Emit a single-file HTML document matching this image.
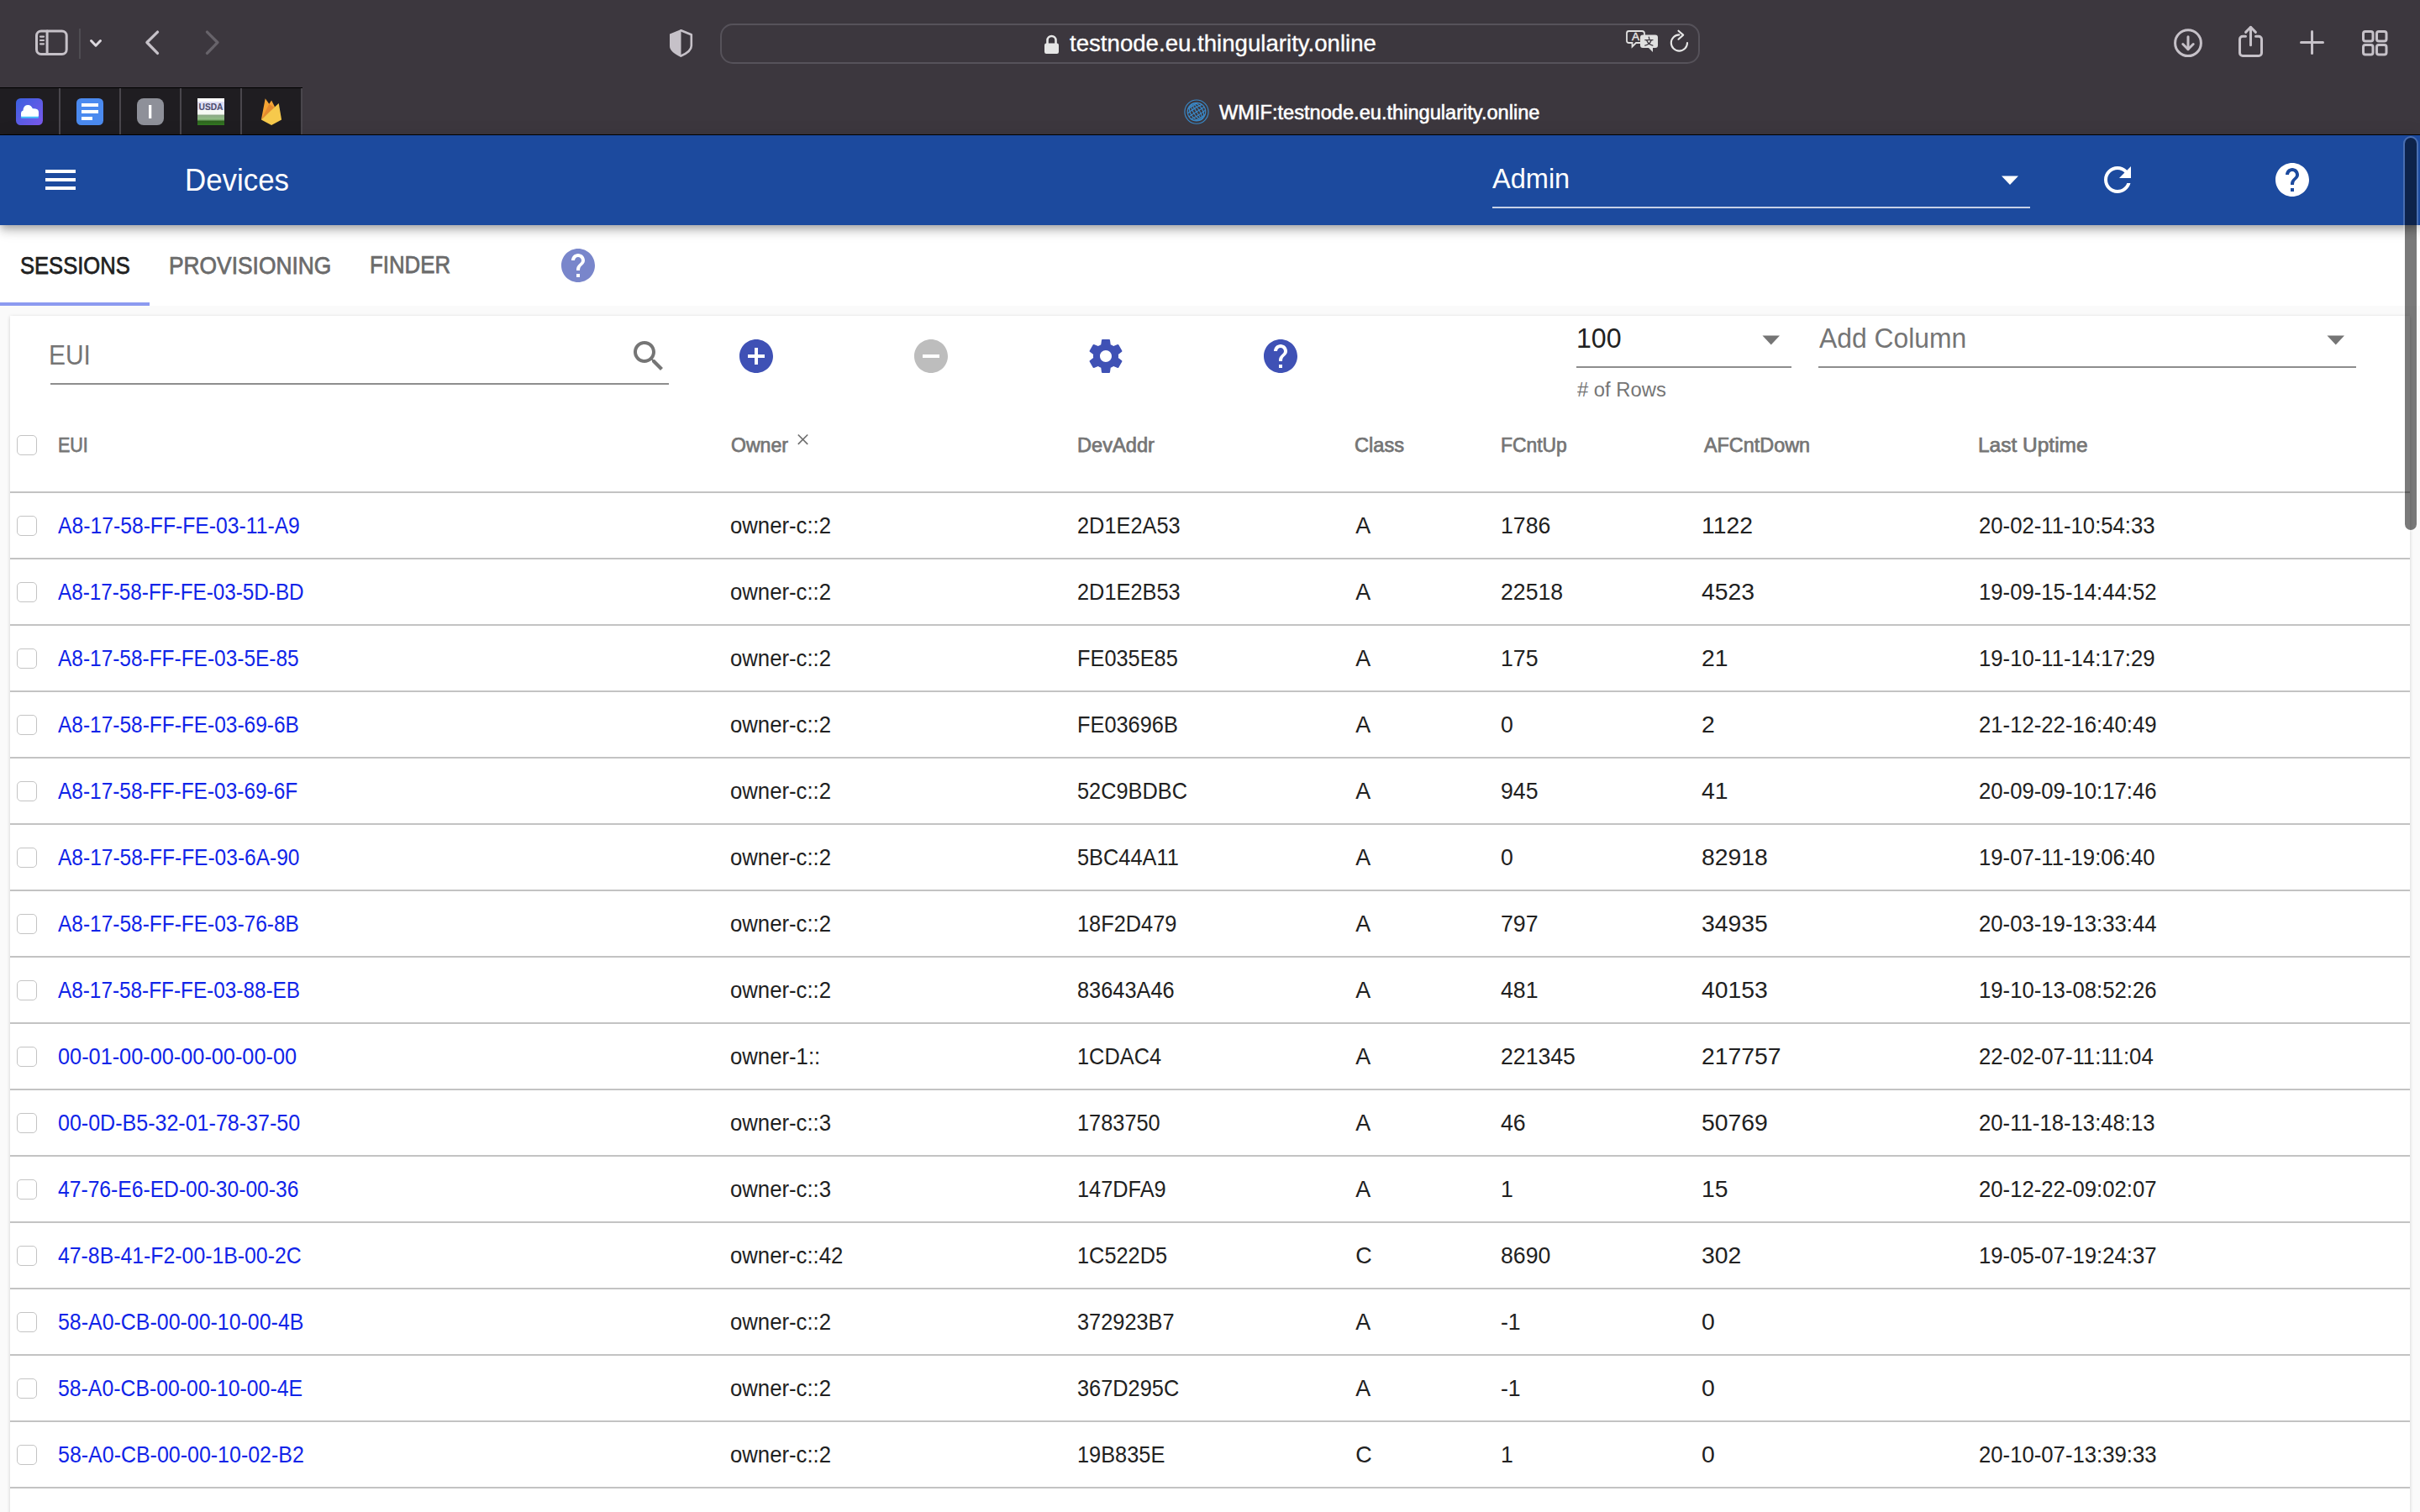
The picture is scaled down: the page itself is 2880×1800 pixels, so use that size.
<!DOCTYPE html>
<html><head><meta charset="utf-8">
<style>
*{margin:0;padding:0;box-sizing:border-box}
html,body{width:2880px;height:1800px;overflow:hidden;background:#fafafa;font-family:"Liberation Sans",sans-serif}
.a{position:absolute}
.t{position:absolute;white-space:nowrap;line-height:1}
#toolbar{left:0;top:0;width:2880px;height:161px;background:#3c373e}
#pinned{left:0;top:104px;width:360px;height:56px;background:#1f1d21;border-top:1px solid #000}
.sep{position:absolute;top:0;width:2px;height:56px;background:#49464c}
#tabline{left:0;top:160px;width:2880px;height:1px;background:#000}
#urlbar{left:857px;top:28px;width:1166px;height:48px;border:2px solid #56525a;border-radius:15px}
#appbar{left:0;top:161px;width:2880px;height:107px;background:#1c4a9e;box-shadow:0 4px 8px -2px rgba(0,0,0,.2),0 8px 10px 0 rgba(0,0,0,.14),0 2px 20px 0 rgba(0,0,0,.12);z-index:2}
#tabs{left:0;top:268px;width:2880px;height:96px;background:#fff;z-index:1}
#card{left:12px;top:376px;width:2856px;height:1500px;background:#fff;box-shadow:0 1px 4px rgba(0,0,0,0.18)}
.cb{position:absolute;left:20px;width:24px;height:24px;border:1.5px solid #c4c4c4;border-radius:5px;background:#fff}
.hr{position:absolute;left:12px;width:2856px;height:2px;background:#c3c3c3}
.c{color:#212121}
.lnk{color:#1024e8}
.h{color:#757575;-webkit-text-stroke:0.75px #757575}
.tab{color:#6b6b6b;-webkit-text-stroke:0.75px currentColor}
.ci{fill:#c5c0c7}
</style></head><body>
<div id="toolbar" class="a"></div>
<div id="pinned" class="a">
  <div class="sep" style="left:70px"></div>
  <div class="sep" style="left:142px"></div>
  <div class="sep" style="left:214px"></div>
  <div class="sep" style="left:286px"></div>
  <div class="sep" style="left:358px"></div>
</div>
<div id="tabline" class="a"></div>
<div id="urlbar" class="a"></div>

<svg class="a" style="left:0;top:0" width="2880" height="104" viewBox="0 0 2880 104">
  <g fill="none" stroke="#c6c1c8" stroke-width="3" stroke-linecap="round" stroke-linejoin="round">
    <rect x="43.5" y="37" width="35.7" height="27.6" rx="5.5"/>
    <line x1="56.1" y1="37" x2="56.1" y2="64.6"/>
    <g stroke-width="2.2"><line x1="48" y1="43.6" x2="52" y2="43.6"/><line x1="48" y1="48" x2="52" y2="48"/><line x1="48" y1="52.3" x2="52" y2="52.3"/></g>
    <polyline points="108.5,48.5 114,54.2 119.5,48.5" stroke="#dcd8de"/>
    <polyline points="187.5,38.1 174.9,50.5 187.5,63.4" stroke-width="3.3"/>
    <polyline points="246.5,38.1 258.9,50.5 246.5,63.4" stroke="#67636a" stroke-width="3.3"/>
    <path d="M810.5 36.3 L822.8 41.3 V54.5 C822.8 59.5 817.5 63.5 810.5 66.5" stroke-width="2.6"/>
    <path d="M1998.4 41.4 A9.6 9.6 0 1 0 2008 51" stroke="#e6e6e6" stroke-width="2.1"/>
    <polyline points="1997.5,36.7 2003.2,41.6 1997.5,46.7" stroke="#e6e6e6" stroke-width="2.1"/>
    <circle cx="2604" cy="51.2" r="15.4"/>
    <line x1="2604" y1="43.8" x2="2604" y2="58.6"/>
    <polyline points="2597.8,52.5 2604,58.8 2610.2,52.5"/>
    <path d="M2672.5 43.2 H2669 A3.5 3.5 0 0 0 2665.5 46.7 V63 A3.5 3.5 0 0 0 2669 66.5 H2688 A3.5 3.5 0 0 0 2691.5 63 V46.7 A3.5 3.5 0 0 0 2688 43.2 H2684.5"/>
    <line x1="2678.5" y1="32.5" x2="2678.5" y2="53.8"/>
    <polyline points="2672.6,38.4 2678.5,32.3 2684.4,38.4"/>
    <line x1="2738.5" y1="50.5" x2="2764.5" y2="50.5"/>
    <line x1="2751.5" y1="37.5" x2="2751.5" y2="63.5"/>
    <rect x="2812.5" y="37.5" width="11.5" height="11.5" rx="2.5"/>
    <rect x="2828.5" y="37.5" width="11.5" height="11.5" rx="2.5"/>
    <rect x="2812.5" y="53.5" width="11.5" height="11.5" rx="2.5"/>
    <rect x="2828.5" y="53.5" width="11.5" height="11.5" rx="2.5"/>
  </g>
  <rect x="94" y="34" width="2" height="36" fill="#4f4c52"/>
  <path d="M810.5 35 L797 40.5 V55 C797 60.5 803 64.5 810.5 68 Z" fill="#c6c1c8"/>
  <path d="M1246.5 52 V48 A5 5 0 0 1 1256.5 48 V52" fill="none" stroke="#e6e6e6" stroke-width="2.6"/>
  <rect x="1243" y="51.5" width="17" height="12.5" rx="2.2" fill="#e6e6e6"/>
  <g>
    <path d="M1938.5 37 H1954 A3 3 0 0 1 1957 40 V48 A3 3 0 0 1 1954 51 H1947 L1942.5 55.5 V51 H1938.5 A2.5 2.5 0 0 1 1936 48.5 V39.5 A2.5 2.5 0 0 1 1938.5 37 Z" fill="#3c373e" stroke="#e0e0e0" stroke-width="1.8"/>
    <text x="1941.9" y="47.9" font-family="Liberation Sans" font-size="13.6" fill="#e6e6e6" stroke="#e6e6e6" stroke-width="0.4">A</text>
    <path d="M1955 41.5 H1970 A3 3 0 0 1 1973 44.5 V54 A3 3 0 0 1 1970 57 H1967 V62 L1962 57 H1955 A3 3 0 0 1 1952 54 V44.5 A3 3 0 0 1 1955 41.5 Z" fill="#e0e0e0"/>
    <path d="M1962.3 44.2 L1962.8 46.3 M1957.8 47.6 H1967 M1959.8 48.2 Q1961.5 52.5 1966.8 54.2 M1965 48.2 Q1963.5 52.5 1957.8 54.2" fill="none" stroke="#3c373e" stroke-width="1.3" stroke-linecap="round"/>
  </g>
</svg>
<div class="t" style="left:1272.86px;top:38.64px;font-size:26.90px;color:#fff;transform:scaleX(1.0272);transform-origin:0 0;-webkit-text-stroke:0.3px #fff">testnode.eu.thingularity.online</div>
<svg class="a" style="left:0;top:105px" width="2880" height="56" viewBox="0 105 2880 56">
  <defs>
    <linearGradient id="cg" x1="0" y1="0" x2="1" y2="1"><stop offset="0" stop-color="#3a60de"/><stop offset="1" stop-color="#7b58ec"/></linearGradient>
    <linearGradient id="ug" x1="0" y1="0" x2="0" y2="1"><stop offset="0" stop-color="#fff"/><stop offset="0.6" stop-color="#f4f8f2"/><stop offset="0.62" stop-color="#8ca886"/><stop offset="0.78" stop-color="#8fbd84"/><stop offset="0.86" stop-color="#2f6420"/><stop offset="1" stop-color="#337a22"/></linearGradient>
  </defs>
  <rect x="19" y="117" width="32" height="32" rx="5.5" fill="url(#cg)"/>
  <path d="M25.5 140.8 H45 Q46 140.8 46 139.5 V134 Q46 130 42 129.6 L38.8 129.3 Q37 125 33 125 Q28 125 27.6 131.5 Q25 132.2 25 135 V139.5 Q25 140.8 25.5 140.8 Z" fill="#47c1f8"/>
  <path d="M25.5 138.8 H45 Q46 138.8 46 137.5 V134 Q46 130 42 129.6 L38.8 129.3 Q37 125 33 125 Q28 125 27.6 131.5 Q25 132.2 25 135 V137.5 Q25 138.8 25.5 138.8 Z" fill="#fff"/>
  <rect x="91" y="117" width="32" height="32" rx="5.5" fill="#4b8aef"/>
  <rect x="97" y="123" width="20" height="4" fill="#fff"/>
  <rect x="97" y="131" width="20" height="4" fill="#fff"/>
  <rect x="97" y="139" width="13" height="4" fill="#fff"/>
  <rect x="163" y="117" width="32" height="32" rx="8" fill="#8e9099"/>
  <rect x="177" y="125" width="3.3" height="16" fill="#fff"/>
  <rect x="235" y="117" width="32" height="32" fill="url(#ug)"/>
  <rect x="235" y="121" width="32" height="10" fill="#dedef4"/>
  <text x="236.5" y="130.5" font-family="Liberation Sans" font-size="11" font-weight="bold" fill="#4b4c6c" textLength="29" lengthAdjust="spacingAndGlyphs">USDA</text>
  <path d="M310.9 142.4 L315.7 117.2 L320.3 123.8 L323.1 119.5 L327.2 127.6 L331.7 122.9 Z" fill="#f4a434"/>
  <path d="M310.9 142.4 L320.3 123.8 L327 128.6 Z" fill="#e48a2f"/>
  <path d="M310.9 142.4 L331.7 122.9 L335.1 142.6 L323.1 149 Z" fill="#f6c94c"/>
  <clipPath id="gc"><circle cx="1424" cy="133.1" r="11"/></clipPath>
  <g fill="none" stroke="#3a89c8" stroke-width="1.15">
    <circle cx="1424" cy="133.1" r="14.1"/>
    <circle cx="1424" cy="133.1" r="10.8"/>
    <g clip-path="url(#gc)" transform="rotate(-32 1424 133.1)">
      <ellipse cx="1424" cy="133.1" rx="3.6" ry="11"/>
      <ellipse cx="1424" cy="133.1" rx="7.4" ry="11"/>
      <line x1="1424" y1="121" x2="1424" y2="145"/>
      <path d="M1412 129.4 Q1424 127.4 1436 129.4 M1412 125.5 Q1424 123.5 1436 125.5 M1412 133.1 H1436 M1412 136.8 Q1424 138.8 1436 136.8 M1412 140.7 Q1424 142.7 1436 140.7"/>
    </g>
  </g>
</svg>
<div class="t" style="left:1450.82px;top:122.54px;font-size:23.30px;color:#fff;transform:scaleX(1.0135);transform-origin:0 0;-webkit-text-stroke:0.55px #fff">WMIF:testnode.eu.thingularity.online</div>

<div id="appbar" class="a">
  <div class="a" style="left:54px;top:41px;width:36px;height:4px;background:#fff"></div>
  <div class="a" style="left:54px;top:51px;width:36px;height:4px;background:#fff"></div>
  <div class="a" style="left:54px;top:61px;width:36px;height:4px;background:#fff"></div>
<div class="t" style="left:219.81px;top:34.51px;font-size:37.20px;color:#fff;transform:scaleX(0.9372);transform-origin:0 0">Devices</div>
<div class="t" style="left:1776.23px;top:35.35px;font-size:33.10px;color:#fff;transform:scaleX(0.9834);transform-origin:0 0">Admin</div>
  <div class="a" style="left:1776px;top:85px;width:640px;height:2px;background:rgba(255,255,255,0.75)"></div>
  <svg class="a" style="left:2372px;top:190px;margin-top:-161px" width="40" height="40" viewBox="0 0 40 40"><path d="M10 19.5 L30 19.5 L20 30 Z" fill="#fff"/></svg>
  <svg class="a" style="left:2496px;top:29px" width="48" height="48" viewBox="0 0 24 24"><path fill="#fff" d="M17.65 6.35C16.2 4.9 14.21 4 12 4c-4.42 0-7.99 3.58-7.99 8s3.57 8 7.99 8c3.73 0 6.84-2.55 7.73-6h-2.08c-.82 2.33-3.04 4-5.65 4-3.31 0-6-2.69-6-6s2.69-6 6-6c1.66 0 3.14.69 4.22 1.78L13 11h7V4l-2.35 2.35z"/></svg>
  <svg class="a" style="left:2704px;top:29px" width="48" height="48" viewBox="0 0 24 24"><path fill="#fff" d="M12 2C6.48 2 2 6.48 2 12s4.48 10 10 10 10-4.48 10-10S17.52 2 12 2zm1 17h-2v-2h2v2zm2.07-7.75l-.9.92C13.45 12.9 13 13.5 13 15h-2v-.5c0-1.1.45-2.1 1.17-2.83l1.24-1.26c.37-.36.59-.86.59-1.41 0-1.1-.9-2-2-2s-2 .9-2 2H8c0-2.21 1.79-4 4-4s4 1.79 4 4c0 .88-.36 1.68-.93 2.25z"/></svg>
</div>
<div id="tabs" class="a">
<div class="t tab" style="left:23.94px;top:33.97px;font-size:28.90px;color:#212121;transform:scaleX(0.8847);transform-origin:0 0">SESSIONS</div>
<div class="t tab" style="left:201.10px;top:33.58px;font-size:28.90px;transform:scaleX(0.9124);transform-origin:0 0">PROVISIONING</div>
<div class="t tab" style="left:440.26px;top:33.39px;font-size:28.90px;transform:scaleX(0.8933);transform-origin:0 0">FINDER</div>
  <svg class="a" style="left:664px;top:24px" width="48" height="48" viewBox="0 0 24 24"><path fill="#7986cb" d="M12 2C6.48 2 2 6.48 2 12s4.48 10 10 10 10-4.48 10-10S17.52 2 12 2zm1 17h-2v-2h2v2zm2.07-7.75l-.9.92C13.45 12.9 13 13.5 13 15h-2v-.5c0-1.1.45-2.1 1.17-2.83l1.24-1.26c.37-.36.59-.86.59-1.41 0-1.1-.9-2-2-2s-2 .9-2 2H8c0-2.21 1.79-4 4-4s4 1.79 4 4c0 .88-.36 1.68-.93 2.25z"/></svg>
  <div class="a" style="left:0;top:92px;width:178px;height:4px;background:#8c9af0"></div>
</div>
<div id="card" class="a"></div>
<div class="t" style="left:58.47px;top:406.20px;font-size:33.10px;color:#757575;transform:scaleX(0.9056);transform-origin:0 0">EUI</div>
<div class="a" style="left:60px;top:456px;width:736px;height:2px;background:#8d8d8d"></div>
<svg class="a" style="left:748px;top:400px" width="48" height="48" viewBox="0 0 24 24"><path fill="#757575" d="M15.5 14h-.79l-.28-.27C15.41 12.59 16 11.11 16 9.5 16 5.91 13.09 3 9.5 3S3 5.91 3 9.5 5.91 16 9.5 16c1.61 0 3.09-.59 4.23-1.57l.27.28v.79l5 4.99L20.49 19l-4.99-5zm-6 0C7.01 14 5 11.99 5 9.5S7.01 5 9.5 5 14 7.01 14 9.5 11.99 14 9.5 14z"/></svg>
<svg class="a" style="left:876px;top:400px" width="48" height="48" viewBox="0 0 24 24"><path fill="#3f51b5" d="M12 2C6.48 2 2 6.48 2 12s4.48 10 10 10 10-4.48 10-10S17.52 2 12 2zm5 11h-4v4h-2v-4H7v-2h4V7h2v4h4v2z"/></svg>
<svg class="a" style="left:1084px;top:400px" width="48" height="48" viewBox="0 0 24 24"><path fill="#bdbdbd" d="M12 2C6.48 2 2 6.48 2 12s4.48 10 10 10 10-4.48 10-10S17.52 2 12 2zm5 11H7v-2h10v2z"/></svg>
<svg class="a" style="left:1292px;top:400px" width="48" height="48" viewBox="0 0 24 24"><path fill="#3f51b5" d="M19.43 12.98c.04-.32.07-.64.07-.98s-.03-.66-.07-.98l2.11-1.65c.19-.15.24-.42.12-.64l-2-3.46c-.12-.22-.39-.3-.61-.22l-2.49 1c-.52-.4-1.08-.73-1.69-.98l-.38-2.65C14.46 2.18 14.25 2 14 2h-4c-.25 0-.46.18-.49.42l-.38 2.65c-.61.25-1.17.59-1.69.98l-2.49-1c-.23-.09-.49 0-.61.22l-2 3.46c-.13.22-.07.49.12.64l2.11 1.65c-.04.32-.07.65-.07.98s.03.66.07.98l-2.11 1.65c-.19.15-.24.42-.12.64l2 3.46c.12.22.39.3.61.22l2.49-1c.52.4 1.08.73 1.69.98l.38 2.65c.03.24.24.42.49.42h4c.25 0 .46-.18.49-.42l.38-2.65c.61-.25 1.17-.59 1.69-.98l2.49 1c.23.09.49 0 .61-.22l2-3.46c.12-.22.07-.49-.12-.64l-2.11-1.65zM12 15.5c-1.93 0-3.5-1.57-3.5-3.5s1.57-3.5 3.5-3.5 3.5 1.57 3.5 3.5-1.57 3.5-3.5 3.5z"/></svg>
<svg class="a" style="left:1500px;top:400px" width="48" height="48" viewBox="0 0 24 24"><path fill="#3f51b5" d="M12 2C6.48 2 2 6.48 2 12s4.48 10 10 10 10-4.48 10-10S17.52 2 12 2zm1 17h-2v-2h2v2zm2.07-7.75l-.9.92C13.45 12.9 13 13.5 13 15h-2v-.5c0-1.1.45-2.1 1.17-2.83l1.24-1.26c.37-.36.59-.86.59-1.41 0-1.1-.9-2-2-2s-2 .9-2 2H8c0-2.21 1.79-4 4-4s4 1.79 4 4c0 .88-.36 1.68-.93 2.25z"/></svg>
<div class="t" style="left:1875.83px;top:386.13px;font-size:33.10px;color:#212121;transform:scaleX(0.9715);transform-origin:0 0">100</div>
<svg class="a" style="left:2097px;top:399px" width="22" height="12" viewBox="0 0 22 12"><path d="M0.5 0.5 H21 L10.75 11.5 Z" fill="#757575"/></svg>
<div class="a" style="left:1876px;top:436px;width:256px;height:2px;background:#8d8d8d"></div>
<div class="t" style="left:1876.61px;top:452.02px;font-size:24.80px;color:#757575;transform:scaleX(0.9601);transform-origin:0 0">#&nbsp;of Rows</div>
<div class="t" style="left:2164.56px;top:385.78px;font-size:33.10px;color:#757575;transform:scaleX(0.9632);transform-origin:0 0">Add Column</div>
<svg class="a" style="left:2769px;top:399px" width="22" height="12" viewBox="0 0 22 12"><path d="M0.5 0.5 H21 L10.75 11.5 Z" fill="#757575"/></svg>
<div class="a" style="left:2164px;top:436px;width:640px;height:2px;background:#8d8d8d"></div>
<div class="cb" style="top:518px"></div>
<div class="t h" style="left:69.20px;top:517.61px;font-size:24.80px;transform:scaleX(0.8668);transform-origin:0 0">EUI</div><div class="t h" style="left:869.78px;top:517.61px;font-size:24.80px;transform:scaleX(0.9297);transform-origin:0 0">Owner</div><div class="t h" style="left:1281.89px;top:517.61px;font-size:24.80px;transform:scaleX(0.9536);transform-origin:0 0">DevAddr</div><div class="t h" style="left:1612.23px;top:517.61px;font-size:24.80px;transform:scaleX(0.9536);transform-origin:0 0">Class</div><div class="t h" style="left:1786.43px;top:517.61px;font-size:24.80px;transform:scaleX(0.9227);transform-origin:0 0">FCntUp</div><div class="t h" style="left:2027.55px;top:517.61px;font-size:24.80px;transform:scaleX(0.9427);transform-origin:0 0">AFCntDown</div><div class="t h" style="left:2354.48px;top:517.61px;font-size:24.80px;transform:scaleX(0.9869);transform-origin:0 0">Last Uptime</div>
<svg class="a" style="left:945px;top:513px" width="20" height="20" viewBox="945 513 20 20"><path d="M949.8 517.5 L961.2 528.9 M961.2 517.5 L949.8 528.9" stroke="#707070" stroke-width="1.7" fill="none"/></svg>
<div class="hr" style="top:585px"></div>
<div class="cb" style="top:614px"></div>
<div class="t c lnk" style="left:69.49px;top:612.74px;font-size:26.90px;transform:scaleX(0.9187);transform-origin:0 0">A8-17-58-FF-FE-03-11-A9</div>
<div class="t c" style="left:868.66px;top:612.74px;font-size:26.90px;transform:scaleX(0.9560);transform-origin:0 0">owner-c::2</div>
<div class="t c" style="left:1281.82px;top:612.74px;font-size:26.90px;transform:scaleX(0.9428);transform-origin:0 0">2D1E2A53</div>
<div class="t c" style="left:1613.24px;top:612.74px;font-size:26.90px">A</div>
<div class="t c" style="left:1786.33px;top:612.74px;font-size:26.90px;transform:scaleX(0.9909);transform-origin:0 0">1786</div>
<div class="t c" style="left:2024.93px;top:612.74px;font-size:26.90px;transform:scaleX(1.0541);transform-origin:0 0">1122</div>
<div class="t c" style="left:2354.72px;top:612.74px;font-size:26.90px;transform:scaleX(0.9559);transform-origin:0 0">20-02-11-10:54:33</div>
<div class="hr" style="top:664px"></div>
<div class="cb" style="top:693px"></div>
<div class="t c lnk" style="left:69.49px;top:691.74px;font-size:26.90px;transform:scaleX(0.9025);transform-origin:0 0">A8-17-58-FF-FE-03-5D-BD</div>
<div class="t c" style="left:868.66px;top:691.74px;font-size:26.90px;transform:scaleX(0.9560);transform-origin:0 0">owner-c::2</div>
<div class="t c" style="left:1281.82px;top:691.74px;font-size:26.90px;transform:scaleX(0.9428);transform-origin:0 0">2D1E2B53</div>
<div class="t c" style="left:1613.24px;top:691.74px;font-size:26.90px">A</div>
<div class="t c" style="left:1786.33px;top:691.74px;font-size:26.90px;transform:scaleX(0.9909);transform-origin:0 0">22518</div>
<div class="t c" style="left:2024.93px;top:691.74px;font-size:26.90px;transform:scaleX(1.0541);transform-origin:0 0">4523</div>
<div class="t c" style="left:2354.72px;top:691.74px;font-size:26.90px;transform:scaleX(0.9559);transform-origin:0 0">19-09-15-14:44:52</div>
<div class="hr" style="top:743px"></div>
<div class="cb" style="top:772px"></div>
<div class="t c lnk" style="left:69.49px;top:770.74px;font-size:26.90px;transform:scaleX(0.9089);transform-origin:0 0">A8-17-58-FF-FE-03-5E-85</div>
<div class="t c" style="left:868.66px;top:770.74px;font-size:26.90px;transform:scaleX(0.9560);transform-origin:0 0">owner-c::2</div>
<div class="t c" style="left:1281.82px;top:770.74px;font-size:26.90px;transform:scaleX(0.9428);transform-origin:0 0">FE035E85</div>
<div class="t c" style="left:1613.24px;top:770.74px;font-size:26.90px">A</div>
<div class="t c" style="left:1786.33px;top:770.74px;font-size:26.90px;transform:scaleX(0.9909);transform-origin:0 0">175</div>
<div class="t c" style="left:2024.93px;top:770.74px;font-size:26.90px;transform:scaleX(1.0541);transform-origin:0 0">21</div>
<div class="t c" style="left:2354.72px;top:770.74px;font-size:26.90px;transform:scaleX(0.9559);transform-origin:0 0">19-10-11-14:17:29</div>
<div class="hr" style="top:822px"></div>
<div class="cb" style="top:851px"></div>
<div class="t c lnk" style="left:69.49px;top:849.74px;font-size:26.90px;transform:scaleX(0.9099);transform-origin:0 0">A8-17-58-FF-FE-03-69-6B</div>
<div class="t c" style="left:868.66px;top:849.74px;font-size:26.90px;transform:scaleX(0.9560);transform-origin:0 0">owner-c::2</div>
<div class="t c" style="left:1281.82px;top:849.74px;font-size:26.90px;transform:scaleX(0.9428);transform-origin:0 0">FE03696B</div>
<div class="t c" style="left:1613.24px;top:849.74px;font-size:26.90px">A</div>
<div class="t c" style="left:1786.33px;top:849.74px;font-size:26.90px;transform:scaleX(0.9909);transform-origin:0 0">0</div>
<div class="t c" style="left:2024.93px;top:849.74px;font-size:26.90px;transform:scaleX(1.0541);transform-origin:0 0">2</div>
<div class="t c" style="left:2354.72px;top:849.74px;font-size:26.90px;transform:scaleX(0.9559);transform-origin:0 0">21-12-22-16:40:49</div>
<div class="hr" style="top:901px"></div>
<div class="cb" style="top:930px"></div>
<div class="t c lnk" style="left:69.49px;top:928.74px;font-size:26.90px;transform:scaleX(0.9089);transform-origin:0 0">A8-17-58-FF-FE-03-69-6F</div>
<div class="t c" style="left:868.66px;top:928.74px;font-size:26.90px;transform:scaleX(0.9560);transform-origin:0 0">owner-c::2</div>
<div class="t c" style="left:1281.82px;top:928.74px;font-size:26.90px;transform:scaleX(0.9428);transform-origin:0 0">52C9BDBC</div>
<div class="t c" style="left:1613.24px;top:928.74px;font-size:26.90px">A</div>
<div class="t c" style="left:1786.33px;top:928.74px;font-size:26.90px;transform:scaleX(0.9909);transform-origin:0 0">945</div>
<div class="t c" style="left:2024.93px;top:928.74px;font-size:26.90px;transform:scaleX(1.0541);transform-origin:0 0">41</div>
<div class="t c" style="left:2354.72px;top:928.74px;font-size:26.90px;transform:scaleX(0.9559);transform-origin:0 0">20-09-09-10:17:46</div>
<div class="hr" style="top:980px"></div>
<div class="cb" style="top:1009px"></div>
<div class="t c lnk" style="left:69.49px;top:1007.73px;font-size:26.90px;transform:scaleX(0.9117);transform-origin:0 0">A8-17-58-FF-FE-03-6A-90</div>
<div class="t c" style="left:868.66px;top:1007.73px;font-size:26.90px;transform:scaleX(0.9560);transform-origin:0 0">owner-c::2</div>
<div class="t c" style="left:1281.82px;top:1007.73px;font-size:26.90px;transform:scaleX(0.9428);transform-origin:0 0">5BC44A11</div>
<div class="t c" style="left:1613.24px;top:1007.73px;font-size:26.90px">A</div>
<div class="t c" style="left:1786.33px;top:1007.73px;font-size:26.90px;transform:scaleX(0.9909);transform-origin:0 0">0</div>
<div class="t c" style="left:2024.93px;top:1007.73px;font-size:26.90px;transform:scaleX(1.0541);transform-origin:0 0">82918</div>
<div class="t c" style="left:2354.72px;top:1007.73px;font-size:26.90px;transform:scaleX(0.9559);transform-origin:0 0">19-07-11-19:06:40</div>
<div class="hr" style="top:1059px"></div>
<div class="cb" style="top:1088px"></div>
<div class="t c lnk" style="left:69.49px;top:1086.73px;font-size:26.90px;transform:scaleX(0.9099);transform-origin:0 0">A8-17-58-FF-FE-03-76-8B</div>
<div class="t c" style="left:868.66px;top:1086.73px;font-size:26.90px;transform:scaleX(0.9560);transform-origin:0 0">owner-c::2</div>
<div class="t c" style="left:1281.82px;top:1086.73px;font-size:26.90px;transform:scaleX(0.9428);transform-origin:0 0">18F2D479</div>
<div class="t c" style="left:1613.24px;top:1086.73px;font-size:26.90px">A</div>
<div class="t c" style="left:1786.33px;top:1086.73px;font-size:26.90px;transform:scaleX(0.9909);transform-origin:0 0">797</div>
<div class="t c" style="left:2024.93px;top:1086.73px;font-size:26.90px;transform:scaleX(1.0541);transform-origin:0 0">34935</div>
<div class="t c" style="left:2354.72px;top:1086.73px;font-size:26.90px;transform:scaleX(0.9559);transform-origin:0 0">20-03-19-13:33:44</div>
<div class="hr" style="top:1138px"></div>
<div class="cb" style="top:1167px"></div>
<div class="t c lnk" style="left:69.49px;top:1165.73px;font-size:26.90px;transform:scaleX(0.9048);transform-origin:0 0">A8-17-58-FF-FE-03-88-EB</div>
<div class="t c" style="left:868.66px;top:1165.73px;font-size:26.90px;transform:scaleX(0.9560);transform-origin:0 0">owner-c::2</div>
<div class="t c" style="left:1281.82px;top:1165.73px;font-size:26.90px;transform:scaleX(0.9428);transform-origin:0 0">83643A46</div>
<div class="t c" style="left:1613.24px;top:1165.73px;font-size:26.90px">A</div>
<div class="t c" style="left:1786.33px;top:1165.73px;font-size:26.90px;transform:scaleX(0.9909);transform-origin:0 0">481</div>
<div class="t c" style="left:2024.93px;top:1165.73px;font-size:26.90px;transform:scaleX(1.0541);transform-origin:0 0">40153</div>
<div class="t c" style="left:2354.72px;top:1165.73px;font-size:26.90px;transform:scaleX(0.9559);transform-origin:0 0">19-10-13-08:52:26</div>
<div class="hr" style="top:1217px"></div>
<div class="cb" style="top:1246px"></div>
<div class="t c lnk" style="left:69.49px;top:1244.73px;font-size:26.90px;transform:scaleX(0.9407);transform-origin:0 0">00-01-00-00-00-00-00-00</div>
<div class="t c" style="left:868.66px;top:1244.73px;font-size:26.90px;transform:scaleX(0.9560);transform-origin:0 0">owner-1::</div>
<div class="t c" style="left:1281.82px;top:1244.73px;font-size:26.90px;transform:scaleX(0.9428);transform-origin:0 0">1CDAC4</div>
<div class="t c" style="left:1613.24px;top:1244.73px;font-size:26.90px">A</div>
<div class="t c" style="left:1786.33px;top:1244.73px;font-size:26.90px;transform:scaleX(0.9909);transform-origin:0 0">221345</div>
<div class="t c" style="left:2024.93px;top:1244.73px;font-size:26.90px;transform:scaleX(1.0541);transform-origin:0 0">217757</div>
<div class="t c" style="left:2354.72px;top:1244.73px;font-size:26.90px;transform:scaleX(0.9559);transform-origin:0 0">22-02-07-11:11:04</div>
<div class="hr" style="top:1296px"></div>
<div class="cb" style="top:1325px"></div>
<div class="t c lnk" style="left:69.49px;top:1323.73px;font-size:26.90px;transform:scaleX(0.9312);transform-origin:0 0">00-0D-B5-32-01-78-37-50</div>
<div class="t c" style="left:868.66px;top:1323.73px;font-size:26.90px;transform:scaleX(0.9560);transform-origin:0 0">owner-c::3</div>
<div class="t c" style="left:1281.82px;top:1323.73px;font-size:26.90px;transform:scaleX(0.9428);transform-origin:0 0">1783750</div>
<div class="t c" style="left:1613.24px;top:1323.73px;font-size:26.90px">A</div>
<div class="t c" style="left:1786.33px;top:1323.73px;font-size:26.90px;transform:scaleX(0.9909);transform-origin:0 0">46</div>
<div class="t c" style="left:2024.93px;top:1323.73px;font-size:26.90px;transform:scaleX(1.0541);transform-origin:0 0">50769</div>
<div class="t c" style="left:2354.72px;top:1323.73px;font-size:26.90px;transform:scaleX(0.9559);transform-origin:0 0">20-11-18-13:48:13</div>
<div class="hr" style="top:1375px"></div>
<div class="cb" style="top:1404px"></div>
<div class="t c lnk" style="left:69.49px;top:1402.73px;font-size:26.90px;transform:scaleX(0.9170);transform-origin:0 0">47-76-E6-ED-00-30-00-36</div>
<div class="t c" style="left:868.66px;top:1402.73px;font-size:26.90px;transform:scaleX(0.9560);transform-origin:0 0">owner-c::3</div>
<div class="t c" style="left:1281.82px;top:1402.73px;font-size:26.90px;transform:scaleX(0.9428);transform-origin:0 0">147DFA9</div>
<div class="t c" style="left:1613.24px;top:1402.73px;font-size:26.90px">A</div>
<div class="t c" style="left:1786.33px;top:1402.73px;font-size:26.90px;transform:scaleX(0.9909);transform-origin:0 0">1</div>
<div class="t c" style="left:2024.93px;top:1402.73px;font-size:26.90px;transform:scaleX(1.0541);transform-origin:0 0">15</div>
<div class="t c" style="left:2354.72px;top:1402.73px;font-size:26.90px;transform:scaleX(0.9559);transform-origin:0 0">20-12-22-09:02:07</div>
<div class="hr" style="top:1454px"></div>
<div class="cb" style="top:1483px"></div>
<div class="t c lnk" style="left:69.49px;top:1481.73px;font-size:26.90px;transform:scaleX(0.9229);transform-origin:0 0">47-8B-41-F2-00-1B-00-2C</div>
<div class="t c" style="left:868.66px;top:1481.73px;font-size:26.90px;transform:scaleX(0.9560);transform-origin:0 0">owner-c::42</div>
<div class="t c" style="left:1281.82px;top:1481.73px;font-size:26.90px;transform:scaleX(0.9428);transform-origin:0 0">1C522D5</div>
<div class="t c" style="left:1613.24px;top:1481.73px;font-size:26.90px">C</div>
<div class="t c" style="left:1786.33px;top:1481.73px;font-size:26.90px;transform:scaleX(0.9909);transform-origin:0 0">8690</div>
<div class="t c" style="left:2024.93px;top:1481.73px;font-size:26.90px;transform:scaleX(1.0541);transform-origin:0 0">302</div>
<div class="t c" style="left:2354.72px;top:1481.73px;font-size:26.90px;transform:scaleX(0.9559);transform-origin:0 0">19-05-07-19:24:37</div>
<div class="hr" style="top:1533px"></div>
<div class="cb" style="top:1562px"></div>
<div class="t c lnk" style="left:69.49px;top:1560.73px;font-size:26.90px;transform:scaleX(0.9271);transform-origin:0 0">58-A0-CB-00-00-10-00-4B</div>
<div class="t c" style="left:868.66px;top:1560.73px;font-size:26.90px;transform:scaleX(0.9560);transform-origin:0 0">owner-c::2</div>
<div class="t c" style="left:1281.82px;top:1560.73px;font-size:26.90px;transform:scaleX(0.9428);transform-origin:0 0">372923B7</div>
<div class="t c" style="left:1613.24px;top:1560.73px;font-size:26.90px">A</div>
<div class="t c" style="left:1786.33px;top:1560.73px;font-size:26.90px;transform:scaleX(0.9909);transform-origin:0 0">-1</div>
<div class="t c" style="left:2024.93px;top:1560.73px;font-size:26.90px;transform:scaleX(1.0541);transform-origin:0 0">0</div>
<div class="hr" style="top:1612px"></div>
<div class="cb" style="top:1641px"></div>
<div class="t c lnk" style="left:69.49px;top:1639.73px;font-size:26.90px;transform:scaleX(0.9228);transform-origin:0 0">58-A0-CB-00-00-10-00-4E</div>
<div class="t c" style="left:868.66px;top:1639.73px;font-size:26.90px;transform:scaleX(0.9560);transform-origin:0 0">owner-c::2</div>
<div class="t c" style="left:1281.82px;top:1639.73px;font-size:26.90px;transform:scaleX(0.9428);transform-origin:0 0">367D295C</div>
<div class="t c" style="left:1613.24px;top:1639.73px;font-size:26.90px">A</div>
<div class="t c" style="left:1786.33px;top:1639.73px;font-size:26.90px;transform:scaleX(0.9909);transform-origin:0 0">-1</div>
<div class="t c" style="left:2024.93px;top:1639.73px;font-size:26.90px;transform:scaleX(1.0541);transform-origin:0 0">0</div>
<div class="hr" style="top:1691px"></div>
<div class="cb" style="top:1720px"></div>
<div class="t c lnk" style="left:69.49px;top:1718.73px;font-size:26.90px;transform:scaleX(0.9285);transform-origin:0 0">58-A0-CB-00-00-10-02-B2</div>
<div class="t c" style="left:868.66px;top:1718.73px;font-size:26.90px;transform:scaleX(0.9560);transform-origin:0 0">owner-c::2</div>
<div class="t c" style="left:1281.82px;top:1718.73px;font-size:26.90px;transform:scaleX(0.9428);transform-origin:0 0">19B835E</div>
<div class="t c" style="left:1613.24px;top:1718.73px;font-size:26.90px">C</div>
<div class="t c" style="left:1786.33px;top:1718.73px;font-size:26.90px;transform:scaleX(0.9909);transform-origin:0 0">1</div>
<div class="t c" style="left:2024.93px;top:1718.73px;font-size:26.90px;transform:scaleX(1.0541);transform-origin:0 0">0</div>
<div class="t c" style="left:2354.72px;top:1718.73px;font-size:26.90px;transform:scaleX(0.9559);transform-origin:0 0">20-10-07-13:39:33</div>
<div class="hr" style="top:1770px"></div>
<div class="a" style="left:2860px;top:162px;width:18px;height:471px;border-radius:9px;border:2px solid rgba(255,255,255,0.2);background:rgba(0,0,0,0.52);background-clip:padding-box;z-index:5"></div>
</body></html>
